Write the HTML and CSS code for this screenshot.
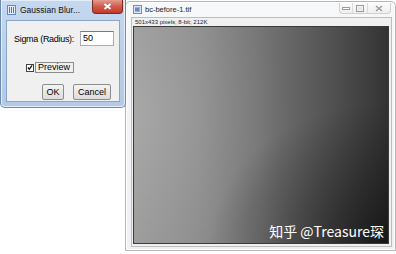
FILE: index.html
```html
<!DOCTYPE html>
<html lang="en">

<head>
    <meta charset="UTF-8">
    <meta name="viewport" content="width=device-width, initial-scale=1.0">

    <link rel="stylesheet" href="styles.css">

    <title>Gaussian Blur</title>
</head>

<body>
    <div class="desk">
        <!-- image window (inactive) -->
        <div class="win img_win">
            <div class="title">
                <svg class="app_icon" width="9" height="9" viewBox="0 0 9 9">
                    <rect x="0.5" y="0.5" width="8" height="8" fill="#dfe9f6" stroke="#6c8fc0" />
                    <rect x="2" y="2" width="5" height="5" fill="#8fb2e0" />
                    <path d="M3 3v3M5 3v3" stroke="#3f6bb0" stroke-width="1" />
                </svg>
                <span class="title_text">bc-before-1.tif</span>
                <div class="caps">
                    <div class="cap cap_min">
                        <svg width="8" height="3" viewBox="0 0 8 3"><rect x="0.5" y="0.5" width="7" height="2" fill="#fff" stroke="#9a9a9a" /></svg>
                    </div>
                    <div class="cap cap_max">
                        <svg width="8" height="7" viewBox="0 0 8 7"><rect x="0.5" y="0.5" width="7" height="6" fill="none" stroke="#9a9a9a" /><rect x="2" y="2" width="4" height="3" fill="#e4e4e4" /></svg>
                    </div>
                    <div class="cap cap_close">
                        <svg width="8" height="7" viewBox="0 0 8 7"><path d="M1 1l6 5M7 1l-6 5" stroke="#9a9a9a" stroke-width="1.4" /></svg>
                    </div>
                </div>
            </div>
            <div class="client">
                <div class="info">501x433 pixels; 8-bit; 212K</div>
                <div class="canvas">
                    <span class="mark">知乎 @Treasure琛</span>
                </div>
            </div>
        </div>

        <!-- Gaussian blur dialog (active) -->
        <div class="win dlg">
            <div class="title">
                <svg class="app_icon" width="9" height="10" viewBox="0 0 9 10">
                    <rect x="0.5" y="0.5" width="8" height="9" fill="#e6eef9" stroke="#5f86bd" />
                    <path d="M2.5 2v6M4.5 2v6M6.5 2v6" stroke="#4a78b8" stroke-width="1" />
                </svg>
                <span class="title_text">Gaussian Blur...</span>
                <div class="close_btn">
                    <svg width="9" height="7" viewBox="0 0 9 7"><path d="M1.5 1l6 5M7.5 1l-6 5" stroke="#fff" stroke-width="1.8" /></svg>
                </div>
            </div>
            <div class="client form">
                <div class="row">
                    <span class="lbl">Sigma (Radius):</span>
                    <div class="field">50</div>
                </div>
                <div class="row check_row">
                    <div class="check">
                        <svg width="7" height="7" viewBox="0 0 7 7"><path d="M1 3.5l1.7 2L6 1" fill="none" stroke="#111" stroke-width="1.4" /></svg>
                    </div>
                    <span class="check_lbl">Preview</span>
                </div>
                <div class="row btns">
                    <div class="btn ok">OK</div>
                    <div class="btn">Cancel</div>
                </div>
            </div>
        </div>
    </div>
</body>

</html>
```

FILE: styles.css
```css
* {
    box-sizing: border-box;
}

html,
body {
    margin: 0;
    background-color: #fff;
    height: 100%;
    overflow: hidden;
    font-family: "Liberation Sans", Arial, sans-serif;
    color: #000;
}

.desk {
    position: relative;
    width: 396px;
    height: 254px;
}

/* windows sit on the desk at their own spots */
.win {
    position: absolute;
    display: flex;
    flex-direction: column;
}

.title {
    display: flex;
    align-items: center;
    position: relative;
}

.title_text {
    white-space: nowrap;
}

/* ---------- image window ---------- */

.img_win {
    left: 125px;
    top: 1px;
    width: 271px;
    height: 250px;
    padding: 0 3px 3px 5px;
    background: linear-gradient(#f7f8fa, #eef0f3);
    border: 1px solid #b4b4b4;
    border-radius: 5px 5px 0 0;
    box-shadow: inset 0 0 0 1px #fff;
}

.img_win .title {
    height: 15px;
    padding-left: 2px;
}

.img_win .title_text {
    font-size: 7.5px;
    margin-left: 3px;
    color: #222;
}

.caps {
    margin-left: auto;
    display: flex;
    align-self: flex-start;
    margin-top: 1px;
    margin-right: 1px;
    border: 1px solid #d0d0d0;
    border-top: none;
    border-radius: 0 0 4px 4px;
    background: linear-gradient(#fbfbfb, #efefef);
    height: 11px;
}

.cap {
    display: flex;
    align-items: center;
    justify-content: center;
    height: 100%;
}

.cap_min {
    width: 13px;
    border-right: 1px solid #dadada;
}

.cap_max {
    width: 15px;
    border-right: 1px solid #dadada;
}

.cap_close {
    width: 22px;
}

.img_win .client {
    flex: 1;
    display: flex;
    flex-direction: column;
    background: #f0f0f0;
    border: 1px solid #bdbdbd;
    padding: 0 2px 2px 1px;
}

.info {
    font-size: 6px;
    line-height: 8px;
    height: 8px;
    padding-left: 2px;
    color: #222;
    white-space: nowrap;
}

/* blurred picture: light on the left, falling to black at the lower right */
.canvas {
    flex: 1;
    position: relative;
    border: 1px solid #3a3a3a;
    background:
        radial-gradient(ellipse 70% 65% at 100% 100%, rgba(0, 0, 0, 0.55), rgba(0, 0, 0, 0) 100%),
        radial-gradient(ellipse 60% 70% at 0% 40%, rgba(255, 255, 255, 0.12), rgba(255, 255, 255, 0) 100%),
        linear-gradient(to right, #9c9c9c 0%, #8e8e8e 25%, #757575 50%, #555 75%, #333 100%);
}

.mark {
    position: absolute;
    right: 4px;
    bottom: 2px;
    font-family: "Noto Sans CJK SC", "Noto Sans", sans-serif;
    font-size: 14px;
    color: #fff;
    white-space: nowrap;
}

/* ---------- dialog ---------- */

.dlg {
    left: 0;
    top: 0;
    width: 126px;
    height: 108px;
    padding: 0 5px 5px 5px;
    background: linear-gradient(#c4d8f0, #b2cae6);
    border: 1px solid #6a8ab4;
    border-top: none;
    border-radius: 0 0 5px 5px;
    box-shadow: inset 0 0 0 1px #e3eefa;
}

.dlg .title {
    height: 20px;
    padding-left: 1px;
}

.dlg .title_text {
    font-size: 8.5px;
    margin-left: 4px;
    color: #111;
}

.close_btn {
    position: absolute;
    top: 0;
    right: -3px;
    width: 31px;
    height: 14px;
    display: flex;
    align-items: center;
    justify-content: center;
    background: linear-gradient(#e49a8f, #cf5a4b 50%, #c23a2b);
    border: 1px solid #7d2a20;
    border-top: none;
    border-radius: 0 0 4px 4px;
}

.dlg .client {
    flex: 1;
    background: #f0f0f0;
    border: 1px solid #8aa5c7;
}

.form {
    display: flex;
    flex-direction: column;
    padding: 10px 5px 0 7px;
    font-size: 9px;
}

.row {
    display: flex;
    align-items: center;
}

.lbl {
    letter-spacing: -0.3px;
}

.field {
    margin-left: auto;
    width: 34px;
    height: 15px;
    background: #fff;
    border: 1px solid #abadb3;
    border-top-color: #7a7a7a;
    padding: 1px 0 0 2px;
    font-size: 9px;
    line-height: 11px;
}

.check_row {
    margin-top: 16px;
    padding-left: 12px;
}

.check {
    width: 8px;
    height: 8px;
    border: 1px solid #444;
    background: #fff;
    display: flex;
    align-items: center;
    justify-content: center;
}

.check_lbl {
    margin-left: 1px;
    border: 1px solid #8c8c8c;
    padding: 0 3px 0 2px;
    line-height: 9px;
}

.btns {
    margin-top: 11px;
    justify-content: flex-end;
    gap: 9px;
    padding-right: 3px;
}

.btn {
    height: 16px;
    padding: 0 4px;
    display: flex;
    align-items: center;
    justify-content: center;
    background: linear-gradient(#f4f4f4, #dcdcdc);
    border: 1px solid #8c8c8c;
    border-radius: 2px;
    font-size: 9px;
}

.ok {
    width: 22px;
}
```
